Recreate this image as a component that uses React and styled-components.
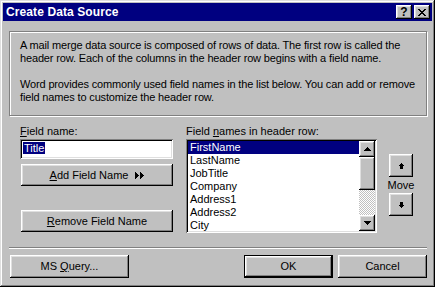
import React from "react";
import styled, { createGlobalStyle, css } from "styled-components";

const GlobalStyle = createGlobalStyle`
  html, body {
    margin: 0;
    padding: 0;
    background: #c0c0c0;
  }
  body {
    font-family: "Liberation Sans", Arial, sans-serif;
    font-size: 11px;
    color: #000;
  }
`;

const raised = css`
  box-shadow: inset -1px -1px #000, inset 1px 1px #fff, inset -2px -2px #808080,
    inset 2px 2px #dfdfdf;
`;

const sunken = css`
  box-shadow: inset 1px 1px #808080, inset -1px -1px #fff, inset 2px 2px #000,
    inset -2px -2px #dfdfdf;
`;

const Window = styled.div`
  width: 435px;
  height: 287px;
  box-sizing: border-box;
  padding: 3px;
  background: #c0c0c0;
  box-shadow: inset -1px -1px #000, inset 1px 1px #dfdfdf, inset -2px -2px #808080,
    inset 2px 2px #fff;
  display: flex;
  flex-direction: column;
`;

const TitleBar = styled.div`
  height: 18px;
  flex-shrink: 0;
  background: #000080;
  display: flex;
  align-items: center;
  padding: 0 2px 0 3px;
`;

const Title = styled.span`
  flex: 1;
  color: #fff;
  font-weight: bold;
  font-size: 12px;
  letter-spacing: 0.1px;
`;

const CaptionButtons = styled.div`
  display: flex;
  gap: 2px;
`;

const CaptionButton = styled.div`
  width: 16px;
  height: 14px;
  background: #c0c0c0;
  ${raised};
  display: flex;
  align-items: center;
  justify-content: center;
  font-weight: bold;
  font-size: 12px;
  line-height: 14px;
`;

const Body = styled.div`
  flex: 1;
  display: flex;
  flex-direction: column;
  padding: 10px 5px 0 6px;
`;

const InfoBox = styled.div`
  height: 85px;
  box-sizing: border-box;
  border: 1px solid #808080;
  box-shadow: inset 1px 1px #fff, 1px 1px #fff;
  padding: 7px 10px 0;
  line-height: 13px;
  letter-spacing: -0.15px;
  white-space: nowrap;
`;

const Paragraph = styled.p`
  margin: 0 0 13px;
`;

const Middle = styled.div`
  display: flex;
  margin-top: 9px;
  padding-left: 11px;
`;

const Column = styled.div`
  display: flex;
  flex-direction: column;
  width: ${(p) => p.$width}px;
  margin-left: ${(p) => p.$gap || 0}px;
`;

const Label = styled.div`
  height: 13px;
  line-height: 13px;
`;

const TextField = styled.div`
  height: 20px;
  margin-top: 1px;
  box-sizing: border-box;
  background: #fff;
  ${sunken};
  padding: 3px 0 0 3px;
  line-height: 13px;
`;

const Selected = styled.span`
  background: #000080;
  color: #fff;
  padding: 0 1px;
`;

const Button = styled.div`
  width: ${(p) => p.$width}px;
  height: ${(p) => p.$height || 22}px;
  box-sizing: border-box;
  background: #c0c0c0;
  ${raised};
  ${(p) =>
    p.$default &&
    css`
      box-shadow: inset 0 0 0 1px #000, inset -2px -2px #000, inset 2px 2px #fff,
        inset -3px -3px #808080, inset 3px 3px #dfdfdf;
    `};
  display: flex;
  align-items: center;
  justify-content: center;
  line-height: 13px;
  margin-top: ${(p) => p.$top || 0}px;
  margin-left: ${(p) => p.$left || 0}px;
  flex-shrink: 0;
`;

const ButtonIcon = styled.span`
  display: flex;
  margin-left: 7px;
`;

const ListBox = styled.div`
  width: 191px;
  height: 94px;
  margin-top: 1px;
  box-sizing: border-box;
  padding: 2px;
  background: #fff;
  ${sunken};
  display: flex;
`;

const Items = styled.div`
  flex: 1;
  overflow: hidden;
`;

const Item = styled.div`
  height: 13px;
  line-height: 13px;
  padding-left: 2px;
  white-space: nowrap;
  background: ${(p) => (p.$selected ? "#000080" : "transparent")};
  color: ${(p) => (p.$selected ? "#fff" : "#000")};
`;

const Scrollbar = styled.div`
  width: 16px;
  display: flex;
  flex-direction: column;
`;

const ScrollButton = styled.div`
  height: ${(p) => p.$height}px;
  flex-shrink: 0;
  background: #c0c0c0;
  ${raised};
  display: flex;
  align-items: center;
  justify-content: center;
`;

const Track = styled.div`
  flex: 1;
  background: repeating-conic-gradient(#c0c0c0 0 25%, #fff 0 50%) 0 0 / 2px 2px;
`;

const MoveColumn = styled.div`
  display: flex;
  flex-direction: column;
  align-items: center;
  width: 24px;
  margin-left: 12px;
  padding-top: 29px;
`;

const MoveLabel = styled.div`
  height: 16px;
  line-height: 16px;
`;

const Separator = styled.div`
  margin-top: 14px;
  border-top: 1px solid #808080;
  border-bottom: 1px solid #fff;
`;

const Footer = styled.div`
  display: flex;
  align-items: center;
  margin-top: 6px;
  gap: 5px;
`;

const Spacer = styled.div`
  flex: 1;
`;

const Glyph = ({ w, h, rects }) => (
  <svg width={w} height={h} viewBox={`0 0 ${w} ${h}`} shapeRendering="crispEdges">
    {rects.map(([x, y, rw, rh], i) => (
      <rect key={i} x={x} y={y} width={rw} height={rh} fill="#000" />
    ))}
  </svg>
);

const closeRects = [
  [0, 0, 2, 1], [6, 0, 2, 1],
  [1, 1, 2, 1], [5, 1, 2, 1],
  [2, 2, 4, 1],
  [3, 3, 2, 1],
  [2, 4, 4, 1],
  [1, 5, 2, 1], [5, 5, 2, 1],
  [0, 6, 2, 1], [6, 6, 2, 1],
];

const triUp = [[3, 0, 1, 1], [2, 1, 3, 1], [1, 2, 5, 1], [0, 3, 7, 1]];
const triDown = [[0, 0, 7, 1], [1, 1, 5, 1], [2, 2, 3, 1], [3, 3, 1, 1]];
const moveUp = [[2, 0, 1, 1], [1, 1, 3, 1], [0, 2, 5, 1], [1, 3, 3, 3]];
const moveDown = [[1, 0, 3, 3], [0, 3, 5, 1], [1, 4, 3, 1], [2, 5, 1, 1]];
const doubleRight = [
  [0, 0, 1, 7], [1, 1, 1, 5], [2, 2, 1, 3], [3, 3, 1, 1],
  [5, 0, 1, 7], [6, 1, 1, 5], [7, 2, 1, 3], [8, 3, 1, 1],
];

const fieldNames = ["FirstName", "LastName", "JobTitle", "Company", "Address1", "Address2", "City"];

export default function App() {
  return (
    <>
      <GlobalStyle />
      <Window>
        <TitleBar>
          <Title>Create Data Source</Title>
          <CaptionButtons>
            <CaptionButton>?</CaptionButton>
            <CaptionButton>
              <Glyph w={8} h={7} rects={closeRects} />
            </CaptionButton>
          </CaptionButtons>
        </TitleBar>
        <Body>
          <InfoBox>
            <Paragraph>
              A mail merge data source is composed of rows of data. The first row is called the
              <br />
              header row. Each of the columns in the header row begins with a field name.
            </Paragraph>
            <Paragraph>
              Word provides commonly used field names in the list below. You can add or remove
              <br />
              field names to customize the header row.
            </Paragraph>
          </InfoBox>

          <Middle>
            <Column $width={153}>
              <Label>
                <u>F</u>ield name:
              </Label>
              <TextField>
                <Selected>Title</Selected>
              </TextField>
              <Button $width={152} $top={5} $left={1}>
                <span>
                  <u>A</u>dd Field Name
                </span>
                <ButtonIcon>
                  <Glyph w={9} h={7} rects={doubleRight} />
                </ButtonIcon>
              </Button>
              <Button $width={152} $top={24} $left={1}>
                <span>
                  <u>R</u>emove Field Name
                </span>
              </Button>
            </Column>

            <Column $width={191} $gap={13}>
              <Label>
                Field <u>n</u>ames in header row:
              </Label>
              <ListBox>
                <Items>
                  {fieldNames.map((name, i) => (
                    <Item key={name} $selected={i === 0}>
                      {name}
                    </Item>
                  ))}
                </Items>
                <Scrollbar>
                  <ScrollButton $height={16}>
                    <Glyph w={7} h={4} rects={triUp} />
                  </ScrollButton>
                  <ScrollButton $height={33} />
                  <Track />
                  <ScrollButton $height={16}>
                    <Glyph w={7} h={4} rects={triDown} />
                  </ScrollButton>
                </Scrollbar>
              </ListBox>
            </Column>

            <MoveColumn>
              <Button $width={24} $height={23}>
                <Glyph w={5} h={6} rects={moveUp} />
              </Button>
              <MoveLabel>Move</MoveLabel>
              <Button $width={24} $height={23}>
                <Glyph w={5} h={6} rects={moveDown} />
              </Button>
            </MoveColumn>
          </Middle>

          <Separator />

          <Footer>
            <Button $width={119} $height={23} $left={1}>
              <span>
                MS <u>Q</u>uery...
              </span>
            </Button>
            <Spacer />
            <Button $width={89} $height={23} $default>
              OK
            </Button>
            <Button $width={89} $height={23}>
              Cancel
            </Button>
          </Footer>
        </Body>
      </Window>
    </>
  );
}
